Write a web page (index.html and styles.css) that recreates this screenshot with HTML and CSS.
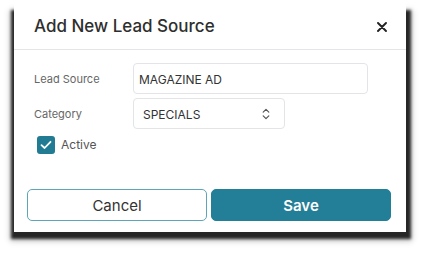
FILE: index.html
```html
<!DOCTYPE html>
<html lang="en">
<head>
<meta charset="utf-8">
<title>Add New Lead Source</title>
<link rel="stylesheet" href="styles.css">
</head>
<body>
<div class="modal">
  <div class="modal-header">
    <h1 class="modal-title">Add New Lead Source</h1>
    <button class="close-btn" aria-label="Close">
      <svg width="10" height="10" viewBox="0 0 10 10"><path d="M1 1 L9 9 M9 1 L1 9" stroke="#222" stroke-width="1.9" stroke-linecap="round"/></svg>
    </button>
  </div>
  <div class="modal-body">
    <div class="form-row">
      <label class="form-label">Lead Source</label>
      <div class="text-input">MAGAZINE AD</div>
    </div>
    <div class="form-row row-select">
      <label class="form-label">Category</label>
      <div class="select-input">
        <span>SPECIALS</span>
        <svg class="chevrons" width="8" height="12" viewBox="0 0 8 12"><path d="M1.2 4.2 L4 1.4 L6.8 4.2 M1.2 7.8 L4 10.6 L6.8 7.8" fill="none" stroke="#555" stroke-width="1.2" stroke-linecap="round" stroke-linejoin="round"/></svg>
      </div>
    </div>
    <div class="check-row">
      <span class="checkbox">
        <svg width="12" height="10" viewBox="0 0 12 10"><path d="M1.5 5.2 L4.6 8 L10.5 1.8" fill="none" stroke="#fff" stroke-width="1.8" stroke-linecap="round" stroke-linejoin="round"/></svg>
      </span>
      <span class="check-label">Active</span>
    </div>
  </div>
  <div class="modal-footer">
    <button class="btn btn-cancel">Cancel</button>
    <button class="btn btn-save">Save</button>
  </div>
</div>
</body>
</html>
```

FILE: styles.css
```css
html {
  margin: 0;
  padding: 0;
  background: #ffffff;
}
body {
  margin: 0;
  padding: 0;
  font-family: Inter, "Noto Sans", "Liberation Sans", sans-serif;
  width: 422px;
  height: 261px;
  overflow: hidden;
}
.modal {
  position: relative;
  margin-left: 14px;
  width: 392px;
  height: 232px;
  background: #ffffff;
  display: flex;
  flex-direction: column;
  box-sizing: border-box;
}
.modal::before {
  content: "";
  position: absolute;
  top: 10px;
  left: -3px;
  right: -5px;
  bottom: -7px;
  background: rgba(0, 0, 0, 0.85);
  box-shadow: 0 1px 5px 1px rgba(0, 0, 0, 0.25);
  filter: blur(1.6px);
  z-index: -1;
}
.modal-header {
  display: flex;
  align-items: center;
  justify-content: space-between;
  height: 49px;
  padding: 0 19px 0 20px;
  border-bottom: 1px solid #e3e5e8;
  box-sizing: content-box;
}
.modal-title {
  margin: 0;
  padding-top: 2px;
  font-size: 17px;
  font-weight: 500;
  line-height: 24px;
  color: #2e2e2e;
}
.close-btn {
  border: 0;
  background: none;
  padding: 0;
  width: 10px;
  height: 10px;
  display: flex;
  margin-top: 4px;
}
.modal-body {
  display: flex;
  flex-direction: column;
  padding: 13px 20px 0 20px;
}
.form-row {
  display: flex;
  align-items: center;
}
.row-select {
  margin-top: 4px;
}
.form-label {
  width: 99px;
  font-size: 11px;
  color: #666;
}
.text-input {
  width: 235px;
  height: 31px;
  box-sizing: border-box;
  border: 1px solid #e2e4e8;
  border-radius: 4px;
  padding: 1px 0 0 5px;
  font-size: 12px;
  color: #333;
  display: flex;
  align-items: center;
}
.select-input {
  width: 152px;
  height: 31px;
  box-sizing: border-box;
  border: 1px solid #e2e4e8;
  border-radius: 4px;
  padding: 1px 14px 0 9px;
  font-size: 12px;
  color: #333;
  display: flex;
  align-items: center;
  justify-content: space-between;
}
.chevrons {
  margin-top: -1px;
}
.check-row {
  display: flex;
  align-items: center;
  margin-top: 6px;
  margin-left: 3px;
  height: 19px;
}
.checkbox {
  width: 18px;
  height: 18px;
  border-radius: 3px;
  background: #217b93;
  display: flex;
  align-items: center;
  justify-content: center;
}
.check-label {
  margin-left: 6px;
  font-size: 12px;
  color: #555;
}
.modal-footer {
  display: flex;
  gap: 4px;
  padding: 35px 15px 11px 13px;
}
.btn {
  flex: 1;
  height: 32px;
  border-radius: 5px;
  font-family: Inter, "Noto Sans", "Liberation Sans", sans-serif;
  font-size: 15px;
  box-sizing: border-box;
  padding: 0;
}
.btn-cancel {
  background: #fff;
  border: 1px solid #5da5b8;
  color: #333;
  font-weight: 400;
}
.btn-save {
  background: #237e97;
  border: 1px solid #237e97;
  color: #fff;
  font-weight: 600;
}
```
